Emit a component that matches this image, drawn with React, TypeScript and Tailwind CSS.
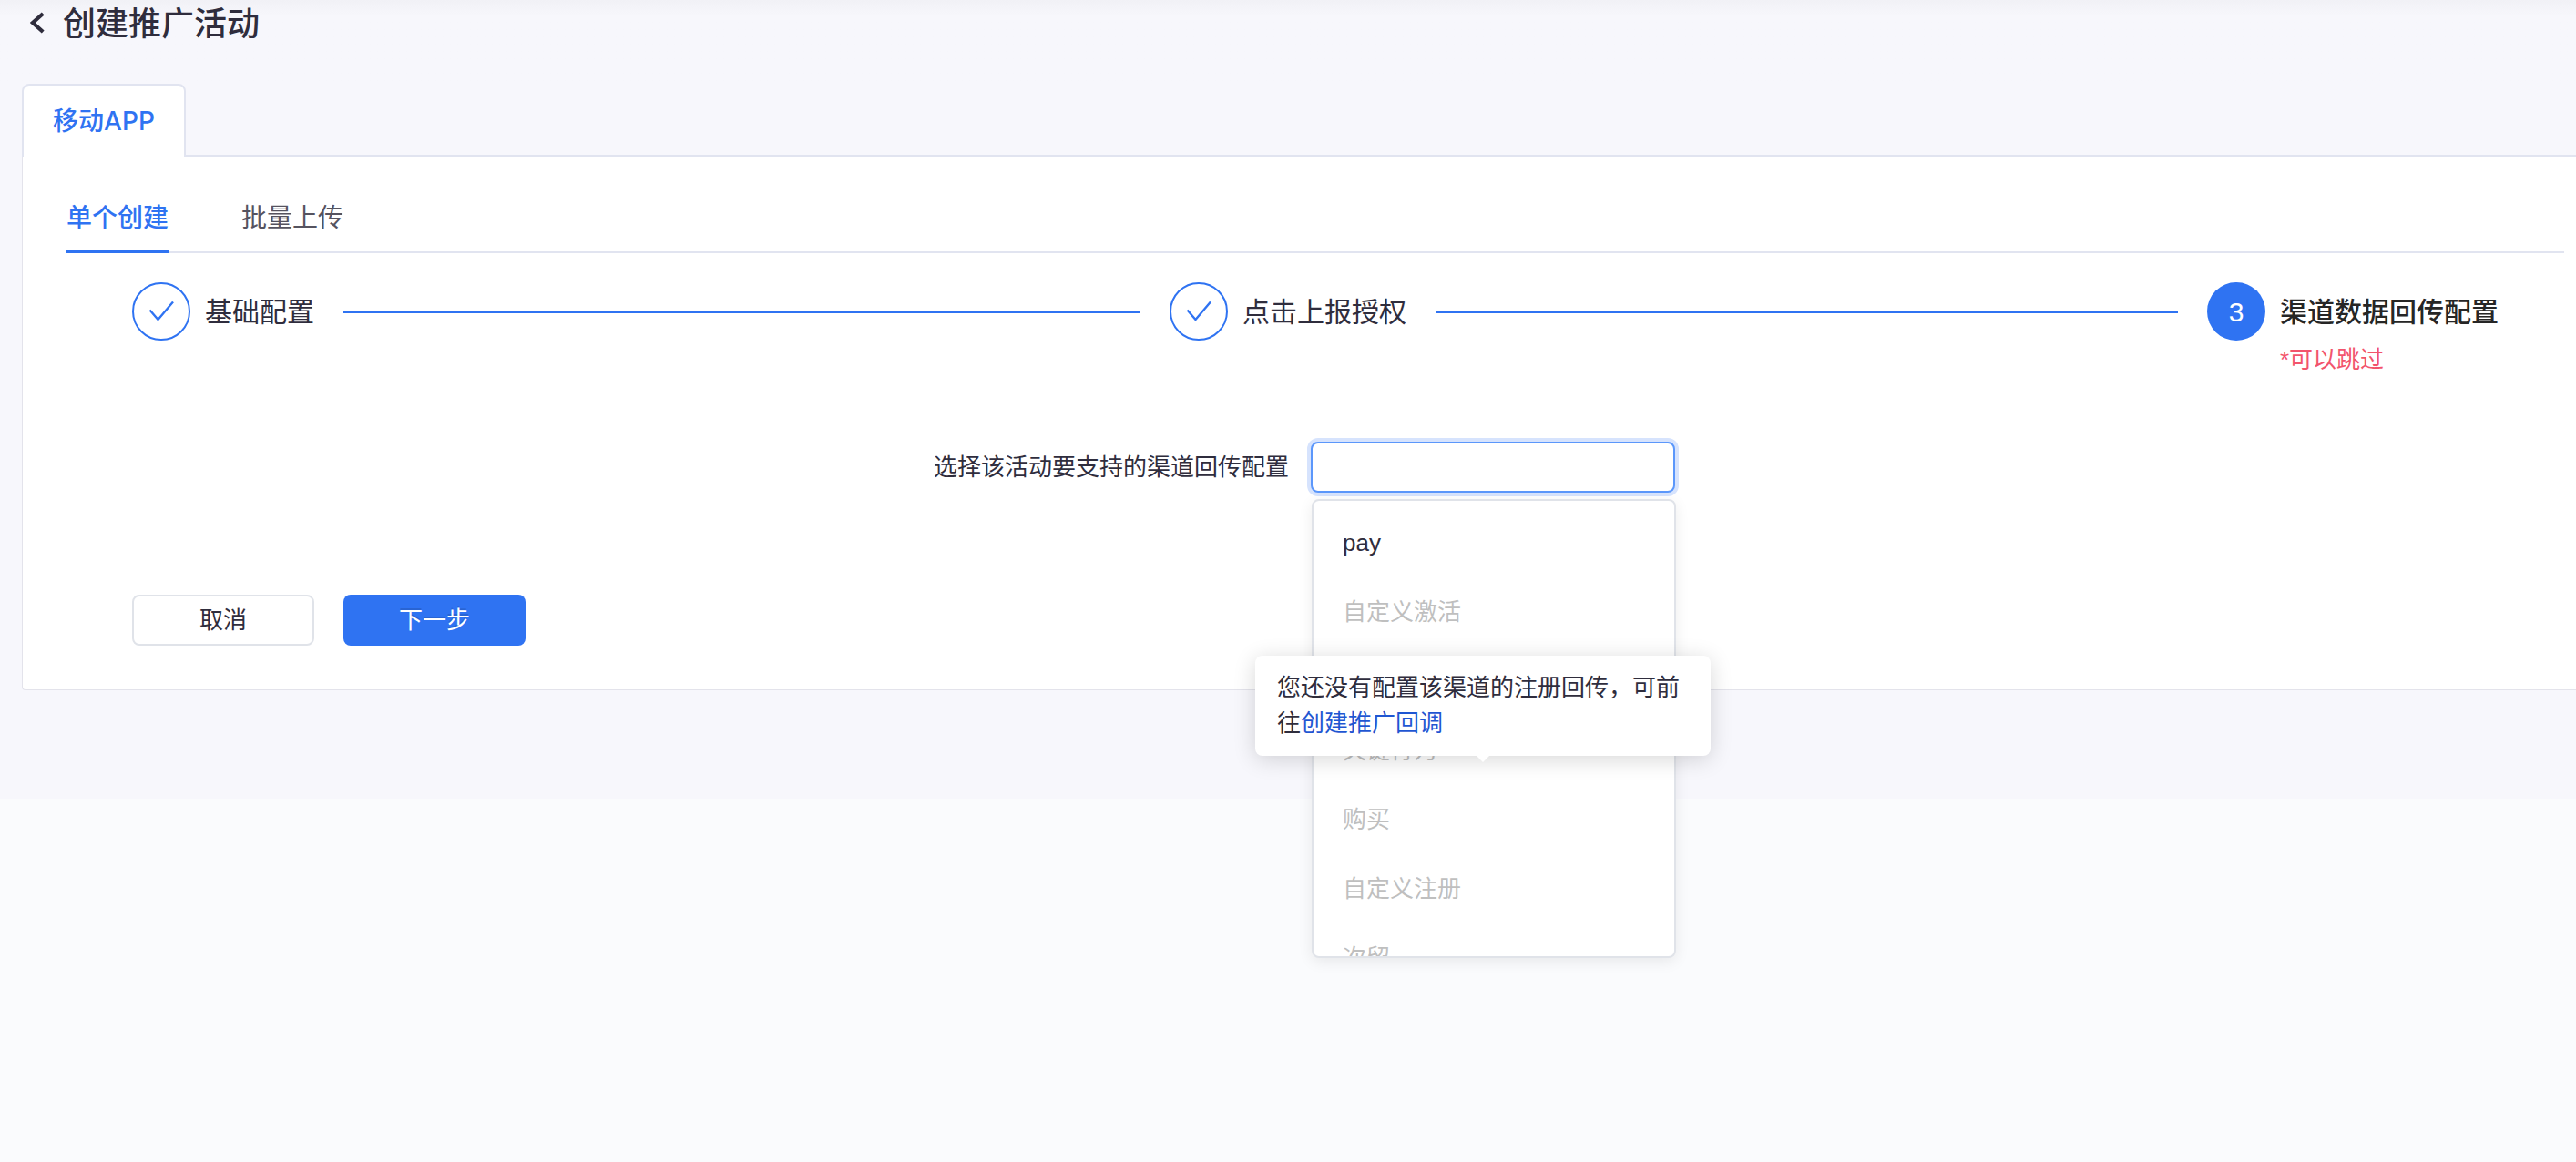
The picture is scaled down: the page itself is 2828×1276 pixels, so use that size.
import React from "react";

const fontFamily = "font-['Liberation_Sans','Noto_Sans_CJK_SC',sans-serif]";

const options = [
  { label: "pay", disabled: false },
  { label: "自定义激活", disabled: true },
  { label: "注册", disabled: true },
  { label: "关键行为", disabled: true },
  { label: "购买", disabled: true },
  { label: "自定义注册", disabled: true },
  { label: "次留", disabled: true },
];

function CheckIcon() {
  return (
    <svg viewBox="2 2 60 60" className="size-full" fill="none" aria-hidden="true">
      <path d="M19.5 30.5 L28.5 41 L45 21.5" stroke="#2f73f2" strokeWidth="2.4" />
    </svg>
  );
}

function DoneStep({ title }: { title: string }) {
  return (
    <li className="flex flex-1 items-start">
      <span className="size-16 shrink-0 rounded-full border-2 border-[#2f73f2]">
        <CheckIcon />
      </span>
      <span className="ml-4 shrink-0 text-[30px] leading-[66px] text-[#2f2d3d]">{title}</span>
      <span className="mx-8 mt-8 h-0.5 flex-1 bg-[#2f73f2]" />
    </li>
  );
}

function CurrentStep({ index, title, note }: { index: number; title: string; note: string }) {
  return (
    <li className="flex items-start gap-4" aria-current="step">
      <span className="flex size-16 shrink-0 items-center justify-center rounded-full bg-[#2f73f2] text-[30px] text-white">
        {index}
      </span>
      <div>
        <div className="text-[30px] font-medium leading-[66px] text-[#262626]">{title}</div>
        <div className="text-[26px] leading-[38px] text-[#f2546c]">{note}</div>
      </div>
    </li>
  );
}

function Tooltip() {
  return (
    <div
      role="tooltip"
      className="absolute top-[235px] -left-[61px] w-[500px] rounded-lg bg-white px-6 py-4 text-[26px] leading-[39px] text-[#2f2d3d] shadow-[0_4px_24px_rgba(0,0,0,0.16)]"
    >
      您还没有配置该渠道的注册回传，可前往
      <a href="#callback" className="text-[#1f56d2]">
        创建推广回调
      </a>
      <svg
        viewBox="0 0 14 7"
        className="absolute top-full left-1/2 h-[7px] w-[14px] -translate-x-1/2"
        aria-hidden="true"
      >
        <path d="M0 0 H14 L7 7 Z" fill="#ffffff" />
      </svg>
    </div>
  );
}

function ChannelSelect() {
  return (
    <div className="relative w-[400px]">
      <input
        id="channel-callback"
        type="text"
        role="combobox"
        aria-expanded="true"
        aria-controls="channel-options"
        className="block h-14 w-full rounded-lg border-2 border-[#5b97fb] bg-white px-4 text-[26px] text-[#2f2d3d] shadow-[0_0_0_4px_#d6e3fd] outline-none"
      />
      <ul
        id="channel-options"
        role="listbox"
        className="absolute top-[63px] left-px h-[504px] w-full overflow-hidden rounded-lg border-2 border-[#e0e3e9] bg-white pt-2 shadow-[0_4px_16px_rgba(0,0,0,0.08)]"
      >
        {options.map((option) => (
          <li
            key={option.label}
            role="option"
            aria-selected="false"
            aria-disabled={option.disabled}
            className={
              option.disabled
                ? "px-8 text-[26px] leading-[76px] text-[#bfbfbf]"
                : "px-8 text-[26px] leading-[76px] text-[#2f2d3d]"
            }
          >
            {option.label}
          </li>
        ))}
      </ul>
      <Tooltip />
    </div>
  );
}

export default function App() {
  return (
    <div className={`relative min-h-screen overflow-hidden bg-[#fafbfd] ${fontFamily}`}>
      <div className="bg-[#f7f7fc] pb-[119px]">
        <header className="flex h-[92px] items-start bg-linear-to-b from-[#f1f1f6] to-[#f7f7fc] to-[18px] pl-[33px]">
          <button type="button" aria-label="返回" className="mr-5 flex h-[50px] w-4 items-center">
            <svg viewBox="0 0 16 24" className="h-6 w-4" fill="none" aria-hidden="true">
              <path d="M14.2 2 L3 12 L14.2 22" stroke="#2f2d3d" strokeWidth="4.2" />
            </svg>
          </button>
          <h1 className="text-[36px] font-medium leading-[54px] text-[#2f2d3d]">创建推广活动</h1>
        </header>

        <main className="pl-6">
          <div className="flex h-20" role="tablist" aria-label="平台">
            <button
              type="button"
              role="tab"
              aria-selected="true"
              className="w-[180px] rounded-t-lg border-2 border-b-0 border-[#e1e4f0] bg-white font-['Inter','Noto_Sans_CJK_SC',sans-serif] text-[28px] font-medium text-[#2f73f2]"
            >
              移动APP
            </button>
            <div className="flex-1 border-b-2 border-[#e1e4f0]" />
          </div>

          <section className="rounded-bl border-b border-l border-[#e3e3eb] bg-white pb-12 pl-12">
            <div
              className="mr-[13px] flex h-[106px] items-end gap-20 border-b-2 border-[#e1e4f0]"
              role="tablist"
              aria-label="创建方式"
            >
              <button
                type="button"
                role="tab"
                aria-selected="true"
                className="-mb-0.5 border-b-4 border-[#2f73f2] pb-3.5 text-[28px] font-medium leading-10 text-[#2f73f2]"
              >
                单个创建
              </button>
              <button
                type="button"
                role="tab"
                aria-selected="false"
                className="-mb-0.5 border-b-4 border-transparent pb-3.5 text-[28px] leading-10 text-[#55535f]"
              >
                批量上传
              </button>
            </div>

            <div className="mr-[85px] ml-[72px] pt-8">
              <ol className="flex">
                <DoneStep title="基础配置" />
                <DoneStep title="点击上报授权" />
                <CurrentStep index={3} title="渠道数据回传配置" note="*可以跳过" />
              </ol>

              <form onSubmit={(event) => event.preventDefault()}>
                <div className="mt-[71px] flex items-center justify-center gap-6 pr-6">
                  <label htmlFor="channel-callback" className="text-[26px] text-[#2f2d3d]">
                    选择该活动要支持的渠道回传配置
                  </label>
                  <ChannelSelect />
                </div>

                <div className="mt-28 flex gap-8">
                  <button
                    type="button"
                    className="h-14 w-[200px] rounded-lg border-2 border-[#e0e3e9] bg-white text-[26px] text-[#2f2d3d]"
                  >
                    取消
                  </button>
                  <button
                    type="submit"
                    className="h-14 w-[200px] rounded-lg bg-[#2f73f2] text-[26px] text-white text-shadow-[0_-2px_0_rgba(0,0,0,0.12)]"
                  >
                    下一步
                  </button>
                </div>
              </form>
            </div>
          </section>
        </main>
      </div>
    </div>
  );
}
